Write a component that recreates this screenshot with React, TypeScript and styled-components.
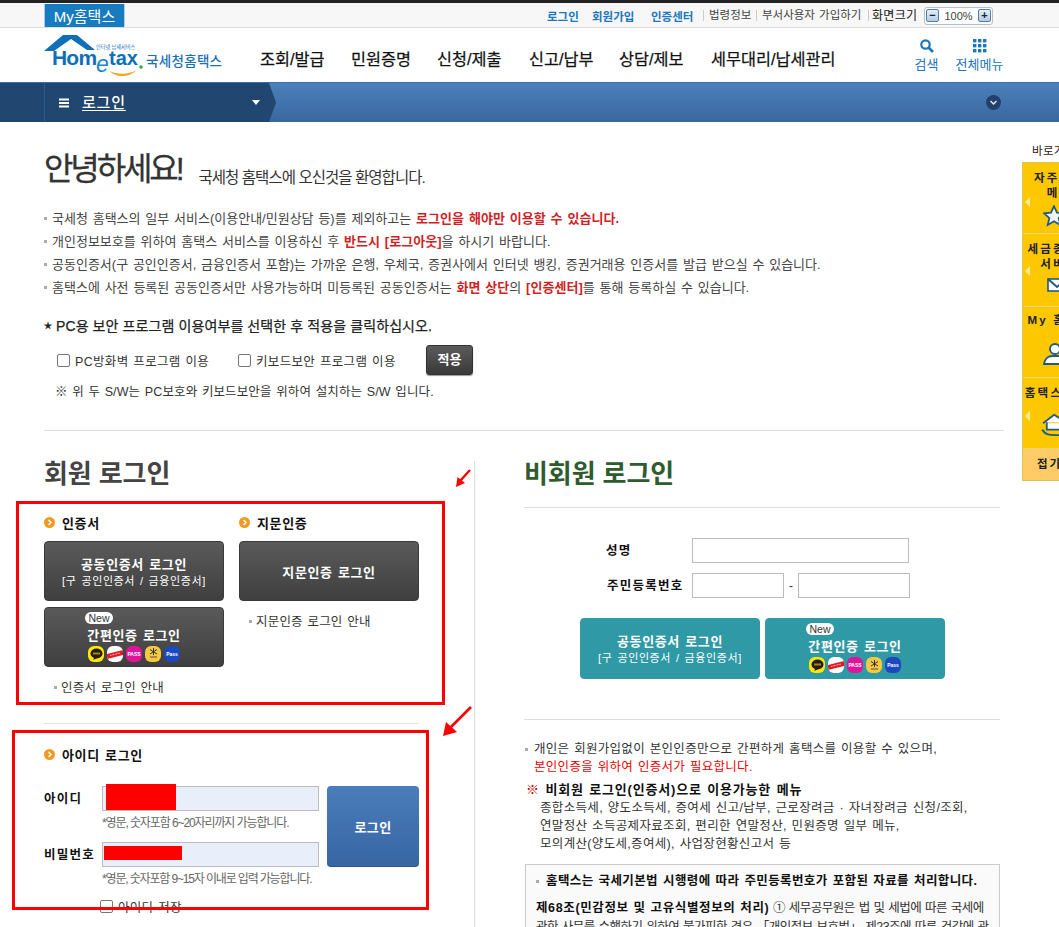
import React from "react";
import styled, { createGlobalStyle } from "styled-components";

const Global = createGlobalStyle`
  html, body { margin: 0; padding: 0; background: #fff; overflow: hidden; }
  body { font-family: "Liberation Sans", "Noto Sans CJK KR", sans-serif; font-size: 13px; color: #333; }
  * { box-sizing: border-box; }
`;

const Page = styled.div`
  position: relative; width: 1059px; height: 927px; overflow: hidden; background: #fff;
`;
const TopStrip = styled.div`height: 3px; background: #222;`;
const UtilBar = styled.div`
  height: 25px; background: #f7f7f7; border-bottom: 1px solid #dcdcdc;
  display: flex; justify-content: space-between; padding: 1px 66px 0 44px;
`;
const MyTab = styled.a`
  width: 81px; height: 23px; background: #177bbf; color: #fff; font-size: 15px;
  display: flex; align-items: center; justify-content: center; border: 1px solid #a9cfe8; border-top: 0; border-bottom: 0;
`;
const UtilLinks = styled.div`display: flex; align-items: center; height: 23px; font-size: 11.5px; word-spacing: 1px;`;
const UtilLink = styled.a<{ $blue?: boolean; $sep?: boolean; $w: number }>`
  width: ${p => p.$w}px; white-space: nowrap; display: block;
  color: ${p => (p.$blue ? "#1b76bb" : "#444")}; font-weight: ${p => (p.$blue ? 700 : 400)};
  ${p => p.$sep && "border-left: 1px solid #ccc; padding-left: 5px; line-height: 11px; height: 11px;"}
`;
const ZoomText = styled.span`width: 56px; height: 11px; color: #111; font-size: 12px; letter-spacing: .3px; white-space: nowrap; border-left: 1px solid #ccc; padding-left: 3px; line-height: 13px;`;
const ZoomBox = styled.div`
  width: 69px; height: 18px; border: 1px solid #b9bfc7; border-radius: 3px; background: #fff;
  display: flex; align-items: center; justify-content: space-between; padding: 0 1px 0 1px; font-size: 11px; color: #444;
`;
const ZoomBtn = styled.span`
  width: 13px; height: 13px; border: 1px solid #4f7fb0; border-radius: 2px; background: linear-gradient(#e6eef7, #b6cbe2);
  color: #123; font-size: 11px; line-height: 10px; text-align: center; font-weight: 700;
`;

const Header = styled.div`
  height: 54px; display: flex; align-items: center; padding-left: 43px; position: relative;
`;
const Nav = styled.nav`display: flex; margin-left: 37px; font-size: 16px; color: #111; white-space: nowrap;`;
const NavItem = styled.a<{ $w: number }>`width: ${p => p.$w}px; font-size: 16.3px; -webkit-text-stroke: 0.25px #111; line-height: 22px; margin-top: 8px;`;
const HeadTools = styled.div`display: flex; margin-left: 78px; margin-top: 0;`;
const HeadTool = styled.a<{ $w: number }>`
  width: ${p => p.$w}px; display: flex; flex-direction: column; align-items: center; gap: 2px; color: #1b76bb; font-size: 13px; white-space: nowrap; line-height: 17px;
`;

const NavBar = styled.div`
  height: 40px; background: linear-gradient(#4b7fbb, #39689f); border-top: 1px solid #3c6ea8; display: flex; justify-content: space-between; align-items: center; position: relative; padding-right: 58px;
`;
const Crumb = styled.div`
  width: 276px; height: 39px; background: #21466f; padding-left: 44px; display: flex; align-items: center;
  clip-path: polygon(0 0, 269px 0, 276px 50%, 269px 100%, 0 100%);
`;
const CrumbInner = styled.div`
  height: 100%; width: 225px; border-left: 1px solid #2e5a8a; padding-left: 14px; display: flex; align-items: center; color: #fff; position: relative;
`;
const CrumbLabel = styled.span`font-size: 15px; margin-left: 13px; margin-top: -2px; text-decoration: underline; text-underline-offset: 2px; font-weight: 500; letter-spacing: .8px;`;
const CrumbArrow = styled.i`
  margin-left: auto; margin-right: 9px; width: 0; height: 0; border: 4px solid transparent; border-top: 5px solid #fff; border-bottom: 0;
`;
const NavRound = styled.span`width: 15px; height: 15px; border-radius: 50%; background: #22406a; display: flex; align-items: center; justify-content: center;`;

const Content = styled.main`padding: 28px 55px 0 44px;`;
const Greeting = styled.div`display: flex; align-items: flex-start; height: 40px; color: #333;`;
const Hello = styled.h1`margin: -1px 0 0; font-size: 32px; font-weight: 400; letter-spacing: -3.1px; line-height: 40px; -webkit-text-stroke: .3px #333;`;
const Welcome = styled.span`font-size: 15.5px; line-height: 22px; margin: 17px 0 0 17px; letter-spacing: -.95px;`;
const InfoList = styled.ul`margin: 17px 0 0; padding: 0; list-style: none; font-size: 13px; line-height: 23px; color: #444; word-spacing: 1.2px;`;
const InfoItem = styled.li`
  position: relative; padding-left: 8px; white-space: nowrap;
  &::before { content: ""; position: absolute; left: 0; top: 10px; width: 3px; height: 3px; background: #aaa; }
`;
const Red = styled.b`color: #d21f26; font-weight: 700; letter-spacing: .04px;`;
const Notice = styled.p`display: flex; align-items: center; height: 20px; margin: 17px 0 0; font-size: 14px; line-height: 20px; color: #222; -webkit-text-stroke: .25px #222; letter-spacing: .1px; white-space: nowrap;`;
const Star = styled.span`width: 12px; flex: none; font-size: 8px; line-height: 8px;`;
const CheckRow = styled.div`display: flex; align-items: center; height: 30px; margin-top: 9px; padding-left: 13px;`;
const Check = styled.span`
  display: inline-block; flex: none; width: 13px; height: 13px; border: 1px solid #767676; border-radius: 2px; background: #fff; margin-right: 5px;
`;
const CheckLabel = styled.label<{ $w: number }>`display: flex; align-items: center; width: ${p => p.$w}px; white-space: nowrap; font-size: 12.5px; color: #333; letter-spacing: .33px; word-spacing: 1px;`;
const ApplyBtn = styled.button`
  width: 47px; height: 30px; border: 1px solid #333; border-radius: 3px; background: linear-gradient(#5b5b5b, #393939); color: #fff; font: 700 13px "Liberation Sans", "Noto Sans CJK KR", sans-serif; padding: 0 0 3px; box-shadow: 0 1px 1px #999;
`;
const Note = styled.p`margin: 7px 0 0 11px; font-size: 12.5px; line-height: 20px; color: #333; white-space: nowrap; letter-spacing: .12px; word-spacing: 1px;`;
const Rule = styled.hr`margin: 28px 0 0; border: 0; border-top: 1px solid #ddd;`;

const Columns = styled.div`display: flex; margin-top: 30px;`;
const LeftCol = styled.section`width: 431px; border-right: 1px solid #ddd; height: 470px; padding-right: 55px;`;
const RightCol = styled.section`width: 480px; padding-left: 49px; margin-right: -49px; flex: none;`;
const H2 = styled.h2<{ $green?: boolean }>`
  margin: 0; font-size: 26px; font-weight: 700; line-height: 26px; color: ${p => (p.$green ? "#2f5c2f" : "#444")}; letter-spacing: -.1px;
`;
const AuthGrid = styled.div`display: grid; grid-template-columns: 180px 180px; column-gap: 15px; margin-top: 28px;`;
const SecTitle = styled.h3`
  margin: 0; display: flex; align-items: center; gap: 7px; height: 16px; padding-bottom: 2px; font-size: 13px; color: #111; font-weight: 700; letter-spacing: .65px; word-spacing: 1px;
`;
const Dot = styled.span`width: 11px; height: 11px; border-radius: 50%; background: #f09a22; display: flex; align-items: center; justify-content: center; flex: none;`;
const Btn = styled.a<{ $teal?: boolean }>`
  position: relative; display: flex; flex-direction: column; align-items: center; justify-content: center; height: 60px; width: 180px; margin-top: 10px; padding-top: 2px;
  border-radius: 4px; color: #fff;
  background: ${p => (p.$teal ? "#3099a6" : "linear-gradient(#5a5a5a, #3f3f3f)")};
  border: 1px solid ${p => (p.$teal ? "#3099a6" : "#3a3a3a")};
`;
const BtnMain = styled.b<{ $mt?: number }>`margin-top: ${p => p.$mt ?? 0}px; font-size: 13px; line-height: 17px; letter-spacing: .6px; word-spacing: 1.2px;`;
const BtnSub = styled.span`font-size: 11px; line-height: 16px; letter-spacing: .6px; word-spacing: 1.3px; white-space: nowrap;`;
const NewTag = styled.span`
  position: absolute; left: 40px; top: 4px; width: 28px; height: 12px; border-radius: 6px; background: #fff; color: #333; font-size: 10.5px; line-height: 12px; text-align: center;
`;
const Apps = styled.div`display: flex; gap: 3px; margin-top: 2px;`;
const AppIcon = styled.span<{ $bg: string; $fg: string }>`
  width: 16px; height: 16px; border-radius: 6px; background: ${p => p.$bg}; color: ${p => p.$fg}; display: flex; align-items: center; justify-content: center; font-size: 5px; font-weight: 700; overflow: hidden; white-space: nowrap;
`;
const GuideLink = styled.a<{ $ml: number; $mt: number }>`
  position: relative; display: block; margin: ${p => p.$mt}px 0 0 ${p => p.$ml}px; padding-left: 7px; font-size: 12.5px; line-height: 16px; color: #333; letter-spacing: .2px; word-spacing: 1px; white-space: nowrap;
  &::before { content: ""; position: absolute; left: 0; top: 6px; width: 3px; height: 3px; background: #aaa; }
`;
const SubRule = styled.hr`margin: 27px 0 23px; border: 0; border-top: 1px solid #e2e2e2;`;
const LoginForm = styled.div`display: flex; margin-top: 23px; gap: 8px;`;
const Fields = styled.div`width: 275px;`;
const FieldRow = styled.div<{ $mt?: number }>`display: flex; align-items: center; margin-top: ${p => p.$mt ?? 0}px;`;
const FieldLabel = styled.label<{ $w?: number; $pl?: number }>`
  width: ${p => p.$w ?? 58}px; padding-left: ${p => p.$pl ?? 0}px; padding-bottom: 2px; font-size: 12.5px; font-weight: 700; color: #111; white-space: nowrap; letter-spacing: 1.25px;
`;
const TextField = styled.div<{ $w: number; $fill?: boolean }>`
  width: ${p => p.$w}px; height: 25px; border: 1px solid #bbb; background: ${p => (p.$fill ? "#e8effb" : "#fff")}; flex: none;
`;
const Hint = styled.p<{ $ls: number }>`margin: 4px 0 0 58px; font-size: 12px; line-height: 16px; color: #666; letter-spacing: ${p => p.$ls}px; white-space: nowrap;`;
const SaveId = styled.div`display: flex; align-items: center; height: 16px; margin: 11px 0 0 56px; font-size: 12.5px; color: #333; word-spacing: 1px; letter-spacing: .3px;`;
const LoginBtn = styled.a`
  width: 92px; height: 81px; border-radius: 4px; background: linear-gradient(#4a7dbb, #3766a3); color: #fff; font-weight: 700; font-size: 13px; display: flex; align-items: center; justify-content: center; border-bottom: 1px solid #2c5486; letter-spacing: .4px;
`;
const RightRule = styled.hr<{ $mt: number }>`margin: ${p => p.$mt}px 0 0; border: 0; border-top: 1px solid #ddd; width: 476px;`;
const GuestForm = styled.div`margin-top: 30px; display: flex; flex-direction: column; gap: 10px;`;
const Dash = styled.span`width: 14px; text-align: center; color: #333; font-size: 12px;`;
const GuestBtns = styled.div`display: flex; gap: 5px; margin: 20px 0 0 56px;`;
const GuestBtn = styled(Btn)`height: 61px; margin-top: 0;`;
const GuestInfo = styled.ul`margin: 20px 0 0; padding: 0; list-style: none; font-size: 12.5px; line-height: 18px; color: #333; word-spacing: 1px; letter-spacing: .3px; white-space: nowrap;`;
const GuestItem = styled.li`
  position: relative; padding-left: 10px;
  &::before { content: ""; position: absolute; left: 1px; top: 8px; width: 3px; height: 3px; background: #aaa; }
`;
const RedLine = styled.div`padding-left: 10px; color: #e00; `;
const MenuHead = styled.div`margin: 5px 0 0 2px; font-weight: 700; color: #111; font-size: 13px; line-height: 18px; letter-spacing: .8px; word-spacing: 1.2px; white-space: nowrap;`;
const RefMark = styled.span`color: #c00;`;
const MenuBody = styled.div`margin-left: 16px; font-size: 12.5px; line-height: 18px; color: #333; word-spacing: 1px; letter-spacing: .33px; white-space: nowrap;`;
const LawBox = styled.div`
  margin: 11px 0 0 1px; width: 475px; border: 1px solid #ccc; background: #fafafa; padding: 8px 10px 0; height: 100px; overflow: hidden;
`;
const LawHead = styled.div`
  position: relative; padding-left: 10px; font-weight: 700; font-size: 12.5px; line-height: 16px; color: #111; white-space: nowrap; letter-spacing: .38px; word-spacing: 1.2px;
  &::before { content: ""; position: absolute; left: 0; top: 7px; width: 3px; height: 3px; background: #aaa; }
`;
const LawText = styled.p`margin: 10px 0 0; font-size: 12.5px; line-height: 19px; color: #333; letter-spacing: -.5px; word-spacing: .8px; white-space: nowrap;`;
const LawTitle = styled.b`color: #111; letter-spacing: .62px;`;

const Quick = styled.aside`position: absolute; left: 1022px; top: 143px; width: 74px;`;
const QuickLabel = styled.div`height: 19px; padding-left: 10px; font-size: 11.5px; line-height: 17px; color: #222; white-space: nowrap; letter-spacing: .3px;`;
const QuickPanel = styled.div`background: #fdc800; border: 1px solid #d9c558; border-right: 0;`;
const QuickItem = styled.div<{ $h: number; $pt?: number }>`
  position: relative; height: ${p => p.$h}px; border-bottom: 1px solid #e7d77a; padding-top: ${p => p.$pt ?? 8}px; text-align: center;
  font-size: 11.5px; font-weight: 700; line-height: 15px; color: #222; letter-spacing: 2.2px; white-space: nowrap;
`;
const QuickArrow = styled.i<{ $t: number }>`
  position: absolute; left: 2px; top: ${p => p.$t}px; width: 0; height: 0; border: 5px solid transparent; border-left: 0; border-right: 5px solid #ffec8f;
`;
const QuickIcon = styled.svg<{ $ml: number; $mt: number }>`display: block; margin: ${p => p.$mt}px 0 0 ${p => p.$ml}px;`;
const QuickFold = styled.div`height: 31px; background: #ffcb66; padding-right: 20px; text-align: center; font-size: 11.5px; font-weight: 700; line-height: 30px; color: #222; letter-spacing: 2px;`;

const RedBox = styled.div<{ $l: number; $t: number; $w: number; $h: number }>`
  position: absolute; left: ${p => p.$l}px; top: ${p => p.$t}px; width: ${p => p.$w}px; height: ${p => p.$h}px; border: 3px solid #f00; pointer-events: none;
`;
const Redact = styled.div<{ $l: number; $t: number; $w: number; $h: number }>`
  position: absolute; left: ${p => p.$l}px; top: ${p => p.$t}px; width: ${p => p.$w}px; height: ${p => p.$h}px; background: #f00;
`;
const ArrowMark = styled.svg<{ $l: number; $t: number }>`position: absolute; left: ${p => p.$l}px; top: ${p => p.$t}px;`;
const LogoMark = styled.svg`flex: none; margin-top: 2px;`;

const Chev = () => (
  <svg width="7" height="7" viewBox="0 0 7 7"><path d="M2.5 1 5 3.5 2.5 6" fill="none" stroke="#fff" strokeWidth="1.4" /></svg>
);
const Title = ({ children }: { children: React.ReactNode }) => (
  <SecTitle><Dot><Chev /></Dot>{children}</SecTitle>
);
const AppIcons = () => (
  <Apps>
    <AppIcon $bg="#fde800" $fg="#ffe">
      <svg width="13" height="12" viewBox="0 0 13 12"><ellipse cx="6.5" cy="5.500" rx="6" ry="5" fill="#2a1a12" /><path d="M4 9.500 3.500 12 7 10z" fill="#2a1a12" /><rect x="3" y="4.500" width="7" height="2" fill="#a08a20" /></svg>
    </AppIcon>
    <AppIcon $bg="#fff" $fg="#fff">
      <svg width="16" height="10" viewBox="0 0 16 10"><path d="M0 5 16 1v5L0 10z" fill="#e11b22" /><path d="M3 6.500 13 4" stroke="#fff" strokeWidth=".8" strokeDasharray="1 .6" /></svg>
    </AppIcon>
    <AppIcon $bg="#e0149a" $fg="#fff">PASS</AppIcon>
    <AppIcon $bg="#f4c842" $fg="#333">
      <svg width="11" height="11" viewBox="0 0 11 11"><path d="M2 1.500 9 6M9 1.500 2 6M5.500 0v7" stroke="#333" strokeWidth="1" /><path d="M2 9h7" stroke="#333" strokeWidth=".8" /></svg>
    </AppIcon>
    <AppIcon $bg="#1d49c0" $fg="#fff">Pass</AppIcon>
  </Apps>
);

const Logo = () => (
  <LogoMark width="180" height="46" viewBox="0 0 180 46">
    <path d="M1 18 20 2H34L52 17H44L28 6 11 18Z" fill="#0f6fb8" />
    <text x="9" y="32" fontFamily="Liberation Sans" fontWeight="700" fontSize="21" fill="#0f6fb8" letterSpacing="-.8">Hom</text>
    <text x="53" y="39" fontFamily="Liberation Sans" fontStyle="italic" fontSize="23" fill="#1a86c8">e</text>
    <text x="66" y="32" fontFamily="Liberation Sans" fontWeight="700" fontSize="20" fill="#0f6fb8">tax</text>
    <circle cx="98" cy="34" r="1.800" fill="#2fa84f" />
    <path d="M66 38q14 11 28-1q-14 7-28 1z" fill="#f5a623" />
    <text x="53" y="16" fontFamily="Noto Sans CJK KR" fontSize="5.200" fill="#1c6fb0">인터넷 납세서비스</text>
    <text x="103" y="33" fontFamily="Noto Sans CJK KR" fontWeight="500" fontSize="13.500" fill="#1c6fb0" letterSpacing=".3">국세청홈택스</text>
  </LogoMark>
);

export default function App() {
  return (
    <Page>
      <Global />
      <TopStrip />
      <UtilBar>
        <MyTab>My홈택스</MyTab>
        <UtilLinks>
          <UtilLink $blue $w={45}>로그인</UtilLink>
          <UtilLink $blue $w={59}>회원가입</UtilLink>
          <UtilLink $blue $w={52}>인증센터</UtilLink>
          <UtilLink $sep $w={53}>법령정보</UtilLink>
          <UtilLink $sep $w={112}>부서사용자 가입하기</UtilLink>
          <ZoomText>화면크기</ZoomText>
          <ZoomBox>
            <ZoomBtn>−</ZoomBtn>100%<ZoomBtn>+</ZoomBtn>
          </ZoomBox>
        </UtilLinks>
      </UtilBar>
      <Header>
        <Logo />
        <Nav>
          <NavItem $w={91}>조회/발급</NavItem>
          <NavItem $w={86}>민원증명</NavItem>
          <NavItem $w={92}>신청/제출</NavItem>
          <NavItem $w={90}>신고/납부</NavItem>
          <NavItem $w={92}>상담/제보</NavItem>
          <NavItem $w={125}>세무대리/납세관리</NavItem>
        </Nav>
        <HeadTools>
          <HeadTool $w={25}>
            <svg width="16" height="16" viewBox="0 0 16 16"><circle cx="6.500" cy="6.500" r="4.200" fill="none" stroke="#1b76bb" strokeWidth="2.200" /><path d="m9.500 9.500 4.500 4.500" stroke="#1b76bb" strokeWidth="2.600" /></svg>
            검색
          </HeadTool>
          <HeadTool $w={47} style={{ marginLeft: 17 }}>
            <svg width="16" height="16" viewBox="0 0 16 16" fill="#1b76bb">
              {[1, 6, 11].map(y => [1, 6, 11].map(x => <rect key={`${x}-${y}`} x={x} y={y} width="3.400" height="3.400" />))}
            </svg>
            전체메뉴
          </HeadTool>
        </HeadTools>
      </Header>
      <NavBar>
        <Crumb>
          <CrumbInner>
            <svg width="10" height="10" viewBox="0 0 10 10" fill="#fff"><rect y="0.500" width="10" height="2" /><rect y="4" width="10" height="2" /><rect y="7.500" width="10" height="2" /></svg>
            <CrumbLabel>로그인</CrumbLabel>
            <CrumbArrow />
          </CrumbInner>
        </Crumb>
        <NavRound>
          <svg width="9" height="9" viewBox="0 0 9 9"><path d="M1.500 3 4.500 6 7.500 3" fill="none" stroke="#dfe7f2" strokeWidth="1.500" /></svg>
        </NavRound>
      </NavBar>
      <Content>
        <Greeting>
          <Hello>안녕하세요!</Hello>
          <Welcome>국세청 홈택스에 오신것을 환영합니다.</Welcome>
        </Greeting>
        <InfoList>
          <InfoItem>국세청 홈택스의 일부 서비스(이용안내/민원상담 등)를 제외하고는 <Red>로그인을 해야만 이용할 수 있습니다.</Red></InfoItem>
          <InfoItem>개인정보보호를 위하여 홈택스 서비스를 이용하신 후 <Red>반드시 [로그아웃]</Red>을 하시기 바랍니다.</InfoItem>
          <InfoItem>공동인증서(구 공인인증서, 금융인증서 포함)는 가까운 은행, 우체국, 증권사에서 인터넷 뱅킹, 증권거래용 인증서를 발급 받으실 수 있습니다.</InfoItem>
          <InfoItem>홈택스에 사전 등록된 공동인증서만 사용가능하며 미등록된 공동인증서는 <Red>화면 상단</Red>의 <Red>[인증센터]</Red>를 통해 등록하실 수 있습니다.</InfoItem>
        </InfoList>
        <Notice><Star>★</Star>PC용 보안 프로그램 이용여부를 선택한 후 적용을 클릭하십시오.</Notice>
        <CheckRow>
          <CheckLabel $w={181}><Check />PC방화벽 프로그램 이용</CheckLabel>
          <CheckLabel $w={188}><Check />키보드보안 프로그램 이용</CheckLabel>
          <ApplyBtn>적용</ApplyBtn>
        </CheckRow>
        <Note>※ 위 두 S/W는 PC보호와 키보드보안을 위하여 설치하는 S/W 입니다.</Note>
        <Rule />
        <Columns>
          <LeftCol>
            <H2>회원 로그인</H2>
            <AuthGrid>
              <div>
                <Title>인증서</Title>
                <Btn>
                  <BtnMain>공동인증서 로그인</BtnMain>
                  <BtnSub>[구 공인인증서 / 금융인증서]</BtnSub>
                </Btn>
                <Btn style={{ marginTop: 6 }}>
                  <NewTag>New</NewTag>
                  <BtnMain $mt={12}>간편인증 로그인</BtnMain>
                  <AppIcons />
                </Btn>
                <GuideLink $ml={10} $mt={13}>인증서 로그인 안내</GuideLink>
              </div>
              <div>
                <Title>지문인증</Title>
                <Btn><BtnMain>지문인증 로그인</BtnMain></Btn>
                <GuideLink $ml={10} $mt={13}>지문인증 로그인 안내</GuideLink>
              </div>
            </AuthGrid>
            <SubRule />
            <Title>아이디 로그인</Title>
            <LoginForm>
              <Fields>
                <FieldRow>
                  <FieldLabel>아이디</FieldLabel>
                  <TextField $w={217} $fill />
                </FieldRow>
                <Hint $ls={-1.1}>*영문, 숫자포함 6~20자리까지 가능합니다.</Hint>
                <FieldRow $mt={11}>
                  <FieldLabel>비밀번호</FieldLabel>
                  <TextField $w={217} $fill />
                </FieldRow>
                <Hint $ls={-1.15}>*영문, 숫자포함 9~15자 이내로 입력 가능합니다.</Hint>
                <SaveId><Check />아이디 저장</SaveId>
              </Fields>
              <LoginBtn>로그인</LoginBtn>
            </LoginForm>
          </LeftCol>
          <RightCol>
            <H2 $green>비회원 로그인</H2>
            <RightRule $mt={20} />
            <GuestForm>
              <FieldRow>
                <FieldLabel $w={168} $pl={82}>성명</FieldLabel>
                <TextField $w={217} />
              </FieldRow>
              <FieldRow>
                <FieldLabel $w={168} $pl={83}>주민등록번호</FieldLabel>
                <TextField $w={92} />
                <Dash>-</Dash>
                <TextField $w={112} />
              </FieldRow>
            </GuestForm>
            <GuestBtns>
              <GuestBtn $teal>
                <BtnMain>공동인증서 로그인</BtnMain>
                <BtnSub>[구 공인인증서 / 금융인증서]</BtnSub>
              </GuestBtn>
              <GuestBtn $teal>
                <NewTag>New</NewTag>
                <BtnMain $mt={12}>간편인증 로그인</BtnMain>
                <AppIcons />
              </GuestBtn>
            </GuestBtns>
            <RightRule $mt={40} />
            <GuestInfo>
              <GuestItem>개인은 회원가입없이 본인인증만으로 간편하게 홈택스를 이용할 수 있으며,</GuestItem>
              <RedLine>본인인증을 위하여 인증서가 필요합니다.</RedLine>
            </GuestInfo>
            <MenuHead><RefMark>※</RefMark> 비회원 로그인(인증서)으로 이용가능한 메뉴</MenuHead>
            <MenuBody>
              종합소득세, 양도소득세, 증여세 신고/납부, 근로장려금 · 자녀장려금 신청/조회,<br />
              연말정산 소득공제자료조회, 편리한 연말정산, 민원증명 일부 메뉴,<br />
              모의계산(양도세,증여세), 사업장현황신고서 등
            </MenuBody>
            <LawBox>
              <LawHead>홈택스는 국세기본법 시행령에 따라 주민등록번호가 포함된 자료를 처리합니다.</LawHead>
              <LawText>
                <LawTitle>제68조(민감정보 및 고유식별정보의 처리)</LawTitle> ① 세무공무원은 법 및 세법에 따른 국세에<br />
                관한 사무를 수행하기 위하여 불가피한 경우 「개인정보 보호법」 제23조에 따른 건강에 관
              </LawText>
            </LawBox>
          </RightCol>
        </Columns>
      </Content>

      <Quick>
        <QuickLabel>바로가기</QuickLabel>
        <QuickPanel>
          <QuickItem $h={71}>
            <QuickArrow $t={34} />
            자주찾는<br />메뉴
            <QuickIcon $ml={20} $mt={4} width="22" height="22" viewBox="0 0 20 20"><path d="m10 1 2.700 6 6.300.6-4.800 4.200 1.500 6.400L10 14.800l-5.700 3.400 1.500-6.400L1 7.600 7.300 7z" fill="#f4f4f4" stroke="#1f5a85" strokeWidth="1.600" /></QuickIcon>
          </QuickItem>
          <QuickItem $h={73}>
            <QuickArrow $t={32} />
            세금종류별<br />서비스
            <QuickIcon $ml={24} $mt={6} width="20" height="14" viewBox="0 0 20 14"><rect x="1" y="1" width="18" height="12" fill="#fff" stroke="#1f5a85" strokeWidth="1.600" /><path d="m1 1 9 8 9-8" fill="none" stroke="#1f5a85" strokeWidth="2" /></QuickIcon>
          </QuickItem>
          <QuickItem $h={71} $pt={6}>
            My 홈택스
            <QuickIcon $ml={20} $mt={14} width="24" height="24" viewBox="0 0 24 24"><circle cx="12" cy="7" r="5" fill="#fff" stroke="#1f5a85" strokeWidth="1.800" /><path d="M1 22c1-6 5-8 8-8h6c3 0 7 2 8 8z" fill="#fff" stroke="#1f5a85" strokeWidth="1.800" /></QuickIcon>
          </QuickItem>
          <QuickItem $h={71}>
            <QuickArrow $t={33} />
            홈택스 이용
            <QuickIcon $ml={18} $mt={12} width="30" height="24" viewBox="0 0 32 26"><path d="M2 11 14 2l14 9M6 10v8h18v-8" fill="#fff" stroke="#1f5a85" strokeWidth="2" /><path d="M1 18c4 6 8 6 14 6h14" fill="none" stroke="#1f5a85" strokeWidth="2" /></QuickIcon>
          </QuickItem>
          <QuickFold>접기</QuickFold>
        </QuickPanel>
      </Quick>

      <Redact $l={106} $t={784} $w={70} $h={26} />
      <Redact $l={104} $t={846} $w={78} $h={14} />
      <RedBox $l={16} $t={501} $w={429} $h={204} />
      <RedBox $l={12} $t={730} $w={417} $h={180} />
      <ArrowMark $l={454} $t={469} width="18" height="20" viewBox="0 0 18 20"><path d="M16 1 6 12" stroke="#f00" strokeWidth="2.400" /><path d="M2 18 3.500 8 11 14z" fill="#f00" /></ArrowMark>
      <ArrowMark $l={441} $t={705} width="32" height="32" viewBox="0 0 32 32"><path d="M30 2 9 23" stroke="#f00" strokeWidth="2.600" /><path d="M2 31 5 17 16 27z" fill="#f00" /></ArrowMark>
    </Page>
  );
}
